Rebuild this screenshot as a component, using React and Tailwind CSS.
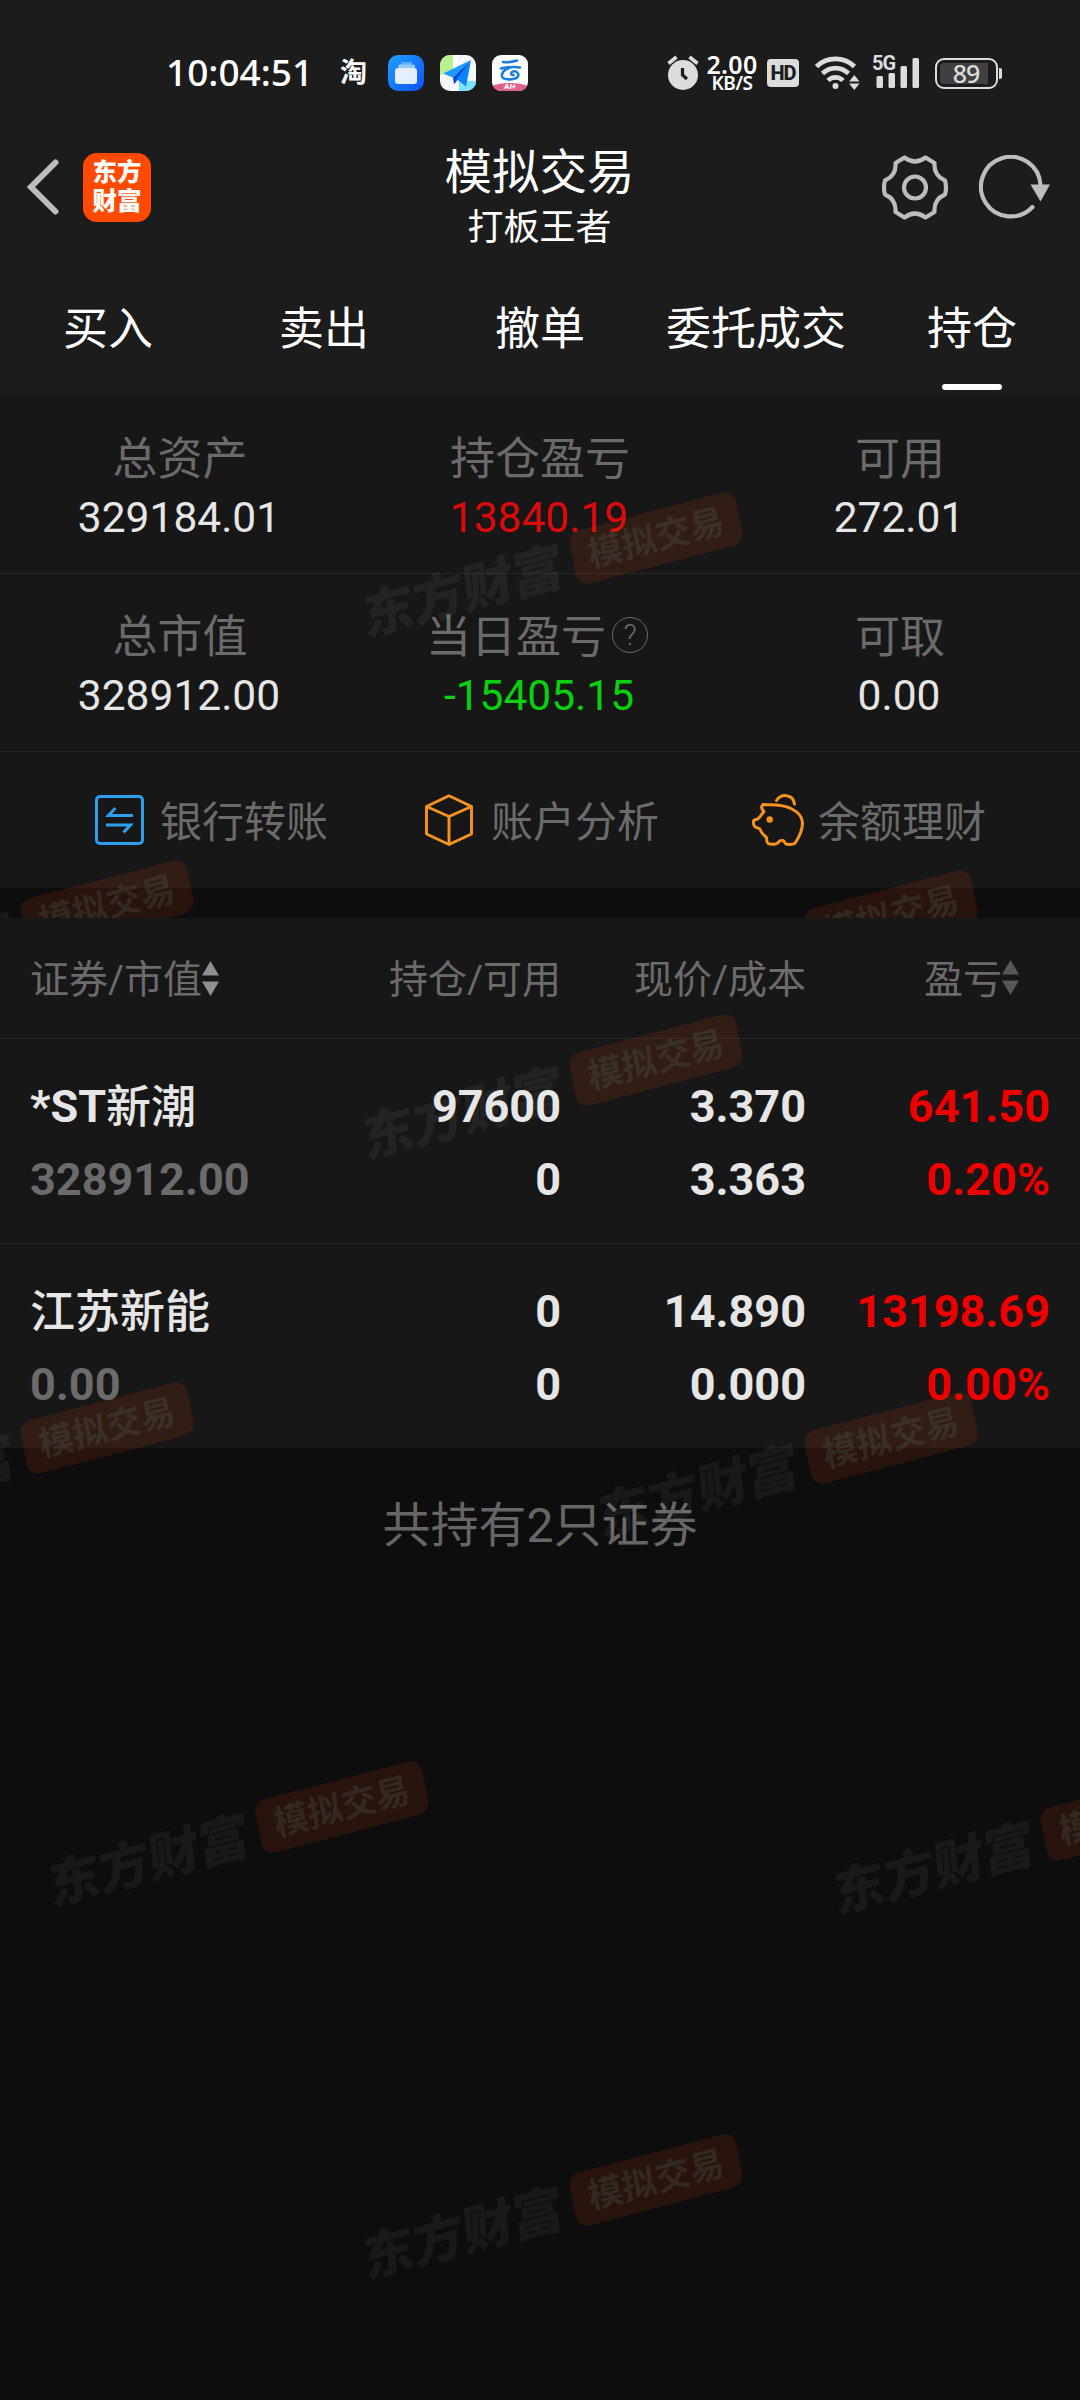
import clsx from "clsx";

const TABS = ["买入", "卖出", "撤单", "委托成交", "持仓"];
const ACTIVE_TAB = "持仓";

const SUMMARY = [
  [
    { label: "总资产", value: "329184.01" },
    { label: "持仓盈亏", value: "13840.19", tone: "up" },
    { label: "可用", value: "272.01" },
  ],
  [
    { label: "总市值", value: "328912.00" },
    { label: "当日盈亏", value: "-15405.15", tone: "down", help: true },
    { label: "可取", value: "0.00" },
  ],
];

const HOLDINGS = [
  {
    name: "*ST新潮",
    marketValue: "328912.00",
    amount: "97600",
    available: "0",
    price: "3.370",
    cost: "3.363",
    profit: "641.50",
    ratio: "0.20%",
  },
  {
    name: "江苏新能",
    marketValue: "0.00",
    amount: "0",
    available: "0",
    price: "14.890",
    cost: "0.000",
    profit: "13198.69",
    ratio: "0.00%",
  },
];

// badge centres, relative to the layer they are painted on
const WATERMARKS = [
  { x: 656, y: 142 },
  { x: 107, y: 510 },
  { x: 891, y: 520 },
  { x: 342, y: 889 },
  { x: 1127, y: 897 },
  { x: 656, y: 1262 },
];

function Watermarks() {
  return (
    <div className="pointer-events-none absolute inset-0 overflow-hidden">
      {WATERMARKS.map(({ x, y }) => (
        <div key={`${x}-${y}`} className="absolute" style={{ left: x, top: y }}>
          <div className="absolute right-[-86px] top-[-36px] flex h-[72px] origin-[calc(100%-86px)_50%] -rotate-[14.7deg] -skew-x-[3deg] items-center gap-[11px] whitespace-nowrap">
            <span className="mt-[7px] -skew-x-6 text-[51.5px] font-black leading-none text-white/[0.05]">
              东方财富
            </span>
            <span className="flex h-[54px] w-[172px] items-center justify-center rounded-[12px] bg-[#ff4a00]/[0.11] text-[35px] font-bold leading-none text-[#6f9a9f]/[0.16]">
              模拟交易
            </span>
          </div>
        </div>
      ))}
    </div>
  );
}

function AlarmIcon() {
  return (
    <svg width="32" height="36" viewBox="0 0 32 36" fill="none">
      <circle cx="16" cy="20" r="15" fill="#dcdcdc" />
      <path d="M1.5 8.5 9.5 2M30.5 8.5 22.5 2" stroke="#dcdcdc" strokeWidth="3.6" />
      <path d="M15.5 13v7l4.5 4" stroke="#1c1c1c" strokeWidth="3.2" />
    </svg>
  );
}

function WifiIcon() {
  return (
    <svg width="45" height="36" viewBox="0 0 45 36" fill="none">
      <g stroke="#dcdcdc" strokeWidth="4.6">
        <path d="M1.5 11.5a27.5 27.5 0 0 1 38 0" />
        <path d="M7.5 18.5a18.5 18.5 0 0 1 26 0" />
        <path d="M13 25.5a10.5 10.5 0 0 1 15 0" />
      </g>
      <circle cx="20.5" cy="31" r="3" fill="#dcdcdc" />
      <path d="M34 26.5 39.3 20l5.2 6.5zM34 28.5h10.5L39.3 35z" fill="#dcdcdc" />
    </svg>
  );
}

function SignalIcon() {
  return (
    <div className="relative h-[36px] w-[48px]">
      <svg width="48" height="36" viewBox="0 0 48 36" fill="#dcdcdc">
        <rect x="3.5" y="21" width="6.5" height="12" rx="1.5" />
        <rect x="15.5" y="18" width="6.5" height="15" rx="1.5" />
        <rect x="27.5" y="11" width="6.5" height="22" rx="1.5" />
        <rect x="39.5" y="3" width="6.5" height="30" rx="1.5" />
      </svg>
      <span className="absolute -left-px -top-px text-[20px] font-bold leading-[18px] tracking-[-1px] text-[#dcdcdc]">
        5G
      </span>
    </div>
  );
}

function BatteryIcon() {
  return (
    <div className="flex items-center gap-[1px]">
      <div className="flex h-[31px] w-[63px] items-center rounded-[9px] border-[2.5px] border-[#dcdcdc] px-[3px]">
        <div className="flex h-[21px] w-[48px] items-center justify-center rounded-l-[4px] bg-[#404040] pl-[4px] font-['Noto_Sans'] text-[25px] font-medium leading-none tracking-[-1px] text-[#dcdcdc]">
          89
        </div>
      </div>
      <div className="h-[11px] w-[3px] rounded-r-[2px] bg-[#dcdcdc]" />
    </div>
  );
}

function StoreIcon() {
  return (
    <svg width="36" height="36" viewBox="0 0 36 36">
      <defs>
        <linearGradient id="store" x1="0" y1="0" x2="1" y2="1">
          <stop offset="0" stopColor="#1fa2ff" />
          <stop offset="1" stopColor="#0d50f5" />
        </linearGradient>
      </defs>
      <rect width="36" height="36" rx="10" fill="url(#store)" />
      <rect x="13" y="7" width="11" height="3" rx="1" fill="#5cb0ff" />
      <rect x="10" y="9.5" width="17" height="4" rx="1.5" fill="#90c9ff" />
      <rect x="7" y="13" width="22" height="16" rx="3" fill="#e4effe" />
    </svg>
  );
}

function MapIcon() {
  return (
    <svg width="36" height="36" viewBox="0 0 36 36">
      <defs>
        <clipPath id="map-clip">
          <rect width="36" height="36" rx="10" />
        </clipPath>
      </defs>
      <g clipPath="url(#map-clip)">
        <rect width="36" height="36" fill="#f3f6fa" />
        <path d="M0 0h13v14L0 20z" fill="#b9f08f" />
        <path d="M19 26h17v10H19z" fill="#7de2fd" />
        <path d="M13 0h5v36h-5z" fill="#fff" />
        <path d="M31 5 3 18.5l10 4z" fill="#1d9bff" />
        <path d="M31 5 13 22.5l1 7 3.5-4.5z" fill="#0448d8" />
        <path d="M31 5 16.5 24 26 31.5z" fill="#0a84ff" />
      </g>
    </svg>
  );
}

function CloudAppIcon() {
  return (
    <div className="relative flex h-[36px] w-[36px] justify-center overflow-hidden rounded-[9px] bg-white">
      <svg width="36" height="36" viewBox="0 0 36 36" fill="none">
        <g stroke="#1b7fe0" strokeWidth="2.6" strokeLinecap="round">
          <path d="M11 7c5 .6 10-.2 14-1.5" />
          <path d="M9 13.5c7-1.5 13-2 19-1" />
          <path d="M17 13c-5 2-7.5 5.5-7 8.5.8 3.5 12 4 15.5.5 2.5-3-1-6.5-4.5-5.5-3 1-2 4 .5 3.5" />
        </g>
        <path d="M0 31c8-4 28-4 36 0v5H0z" fill="#e2608c" />
      </svg>
      <span className="absolute bottom-0 text-[8px] font-black italic leading-[8px] text-white">
        AI+
      </span>
    </div>
  );
}

function GearIcon() {
  return (
    <svg width="66" height="65" viewBox="0 0 66 65" fill="none" stroke="#bdbdbd" strokeWidth="4.2" strokeLinejoin="round">
      <path d="M22.5 2.5Q33 10.5 43.5 2.5L52.5 8Q51.5 20.5 63 25.5Q65 32.5 63 39.5Q51.5 44.5 52.5 57L43.5 62.5Q33 54.5 22.5 62.5L13.5 57Q14.5 44.5 3 39.5Q1 32.5 3 25.5Q14.5 20.5 13.5 8Z" />
      <circle cx="33" cy="32.5" r="11" />
    </svg>
  );
}

function RefreshIcon() {
  return (
    <svg width="71" height="65" viewBox="0 0 71 65" fill="none">
      <path d="M61.5 30A29.8 29.8 0 1 0 53.5 52" stroke="#bdbdbd" strokeWidth="4.2" strokeLinecap="round" />
      <path d="M51.5 29.5H71L61.5 46.5z" fill="#bdbdbd" />
    </svg>
  );
}

function TransferIcon() {
  return (
    <svg width="49" height="50" viewBox="0 0 49 50" fill="none" stroke="#2e9fee" strokeWidth="3">
      <rect x="1.5" y="1.5" width="46" height="47" rx="3.5" />
      <path d="M38 20.5H13.5L20.5 13M11 30H35.5L28.5 37.5" />
    </svg>
  );
}

function CubeIcon() {
  return (
    <svg width="48" height="52" viewBox="0 0 48 52" fill="none" stroke="#f7941d" strokeWidth="2.9" strokeLinejoin="round">
      <path d="M24 1.8 46.5 12.5V40L24 50.5 1.5 40V12.5zM1.5 12.5 24 22.5 46.5 12.5M24 22.5V50.5" />
    </svg>
  );
}

function PiggyIcon() {
  return (
    <svg width="52" height="52" viewBox="0 0 52 52" fill="none" stroke="#f7941d" strokeWidth="3" strokeLinecap="round" strokeLinejoin="round">
      <path d="M24.5 6.5C29-.5 41-.5 42.5 10" />
      <path d="M11 10.5C19 11 32 10 39 14.5 46 18 50.5 23 50.5 29 50.5 36 47 43 43.5 48.5 42 51 38 50.5 34.5 50.3 32.5 50 33 47 31 46.5 29 46.2 27.5 46.5 26.5 48 25.5 50.5 22 50.5 18 50 14 49.5 15 47 14.5 43.5 11 41 9 39 8 35 6 33.5 3 34 2 31.5 1 28 1.2 25.5 4 25.5 7 25.5 8 22 12 17.5 9.5 15.5 9 13 11 10.5Z" />
      <circle cx="17.7" cy="25.5" r="3.2" fill="#f7941d" stroke="none" />
    </svg>
  );
}

function SortIcon({ className }) {
  return (
    <svg width="17" height="35" viewBox="0 0 17 35" fill="currentColor" className={clsx("shrink-0", className)}>
      <path d="M8.5 0 17 14.5H0zM0 20.5h17L8.5 35z" />
    </svg>
  );
}

function StatusBar() {
  return (
    <div className="flex h-[120px] items-center justify-between pl-[166px] pr-[78px] pt-[26px]">
      <div className="flex items-center">
        <span className="w-[174px] pb-[3px] font-['Noto_Sans'] text-[37px] font-medium leading-none text-white">
          10:04:51
        </span>
        <span className="w-[48px] pt-px text-[27px] font-bold leading-none text-white">淘</span>
        <div className="flex gap-[16px]">
          <StoreIcon />
          <MapIcon />
          <CloudAppIcon />
        </div>
      </div>
      <div className="flex items-center">
        <AlarmIcon />
        <div className="ml-[6px] flex w-[54px] flex-col items-center font-['Noto_Sans'] font-semibold text-white">
          <span className="text-[25px] leading-[19px] tracking-[0.3px]">2.00</span>
          <span className="pt-px text-[19px] leading-[16px] tracking-[-0.5px]">KB/S</span>
        </div>
        <span className="ml-[8px] mr-px flex h-[28px] w-[32px] items-center justify-center rounded-[4px] bg-[#dcdcdc] text-[20px] font-extrabold leading-none tracking-[-1px] text-[#1c1c1c]">
          HD
        </span>
        <div className="ml-[15px]">
          <WifiIcon />
        </div>
        <div className="ml-[13px]">
          <SignalIcon />
        </div>
        <div className="ml-[14px]">
          <BatteryIcon />
        </div>
      </div>
    </div>
  );
}

function Header() {
  return (
    <div className="grid h-[134px] grid-cols-3 items-center pl-[27px] pr-[30px]">
      <div className="flex items-center gap-[24px]">
        <svg width="32" height="56" viewBox="0 0 32 56" fill="none" stroke="#bdbdbd" strokeWidth="6" strokeLinecap="round" strokeLinejoin="miter">
          <path d="M28.5 3.5 4 28 28.5 52.5" />
        </svg>
        <div className="flex h-[69px] w-[68px] flex-col items-center justify-center rounded-[14px] bg-[#ff4a00] text-[24.5px] font-black leading-[29px] text-white">
          <span>东方</span>
          <span>财富</span>
        </div>
      </div>
      <div className="flex flex-col items-center self-start pl-[2px] pt-[23px] text-white">
        <h1 className="text-[47.5px] leading-[60px]">模拟交易</h1>
        <p className="text-[36px] leading-[50px]">打板王者</p>
      </div>
      <div className="flex items-center justify-end gap-[31px]">
        <GearIcon />
        <RefreshIcon />
      </div>
    </div>
  );
}

function Tabs() {
  return (
    <nav className="grid h-[142px] grid-cols-5">
      {TABS.map((tab) => (
        <button
          key={tab}
          type="button"
          className="flex flex-col items-center justify-between whitespace-nowrap pb-[6px] pt-[46px] text-[45px] leading-[60px] text-white"
        >
          {tab}
          {tab === ACTIVE_TAB ? (
            <span className="h-[6px] w-[60px] rounded-full bg-white" />
          ) : null}
        </button>
      ))}
    </nav>
  );
}

function SummaryCell({ label, value, tone, help }) {
  return (
    <div className="flex flex-col items-center pt-[34px]">
      <div className="flex h-[60px] items-center text-[45px] leading-[60px] text-[#6b6b6b]">
        {label}
        {help ? (
          <span className="ml-[6px] mr-[6px] mt-[-6px] flex h-[36px] w-[36px] items-center justify-center rounded-full border-[1.5px] border-[#6b6b6b] text-[29px] font-light leading-none">
            ?
          </span>
        ) : null}
      </div>
      <div
        className={clsx("mr-[2px] text-[42.5px] leading-[56px]", {
          "text-[#dc0a0a]": tone === "up",
          "text-[#0ad00f]": tone === "down",
          "text-[#e6e6e6]": !tone,
        })}
      >
        {value}
      </div>
    </div>
  );
}

function Action({ icon, label, className }) {
  return (
    <button type="button" className={clsx("flex items-center text-[42px] leading-[60px] text-[#6b6b6b]", className)}>
      {icon}
      <span className="pt-[6px]">{label}</span>
    </button>
  );
}

function HoldingCell({ top, bottom, className, bottomClassName }) {
  return (
    <div className={clsx("flex flex-col", className)}>
      <span className="leading-[73px]">{top}</span>
      <span className={clsx("leading-[73px]", bottomClassName)}>{bottom}</span>
    </div>
  );
}

function Holdings() {
  return (
    <div className="bg-[#171717]">
      <div className="grid h-[121px] grid-cols-[260px_271px_245px_244px] items-center border-b border-[#262626] px-[30px] pt-[3px] text-[39px] leading-[60px] text-[#6b6b6b]">
        <div className="flex items-center">
          证券/市值
          <SortIcon className="mb-[2px] text-[#8e8e93]" />
        </div>
        <div className="text-right">持仓/可用</div>
        <div className="text-right">现价/成本</div>
        <div className="flex items-center justify-end pr-[31px]">
          盈亏
          <SortIcon className="mb-[4px] text-[#58585b]" />
        </div>
      </div>
      {HOLDINGS.map((row, i) => (
        <div
          key={row.name}
          className={clsx(
            "grid grid-cols-[260px_271px_245px_244px] px-[30px] pt-[31px] text-[45px] font-bold text-[#e6e6e6]",
            i < HOLDINGS.length - 1 ? "h-[205px] border-b border-[#262626]" : "h-[204px]",
          )}
        >
          <HoldingCell
            top={
              <>
                {row.name.replace(/[^\x00-\x7f]/g, "")}
                <span className="relative top-px font-medium">
                  {row.name.replace(/[\x00-\x7f]/g, "")}
                </span>
              </>
            }
            bottom={row.marketValue}
            bottomClassName="text-[#6b6b6b]"
          />
          <HoldingCell top={row.amount} bottom={row.available} className="items-end" />
          <HoldingCell top={row.price} bottom={row.cost} className="items-end" />
          <HoldingCell top={row.profit} bottom={row.ratio} className="items-end text-[#ee0000]" />
        </div>
      ))}
    </div>
  );
}

export default function App() {
  return (
    <div className="flex h-[2400px] w-[1080px] flex-col overflow-hidden bg-[#0d0d0d] font-['Roboto','Noto_Sans_CJK_SC',sans-serif]">
      <header className="bg-[#1c1c1c]">
        <StatusBar />
        <Header />
        <Tabs />
      </header>

      <section className="relative h-[522px]">
        <div className="h-[492px] bg-[#171717]">
          {SUMMARY.map((row) => (
            <div key={row[0].label} className="grid h-[178px] grid-cols-3 border-b border-[#262626]">
              {row.map((cell) => (
                <SummaryCell key={cell.label} {...cell} />
              ))}
            </div>
          ))}
          <div className="flex h-[136px] items-center whitespace-nowrap pl-[95px]">
            <Action icon={<TransferIcon />} label="银行转账" className="mr-[97px] gap-[16px]" />
            <Action icon={<CubeIcon />} label="账户分析" className="mr-[93px] gap-[18px]" />
            <Action icon={<PiggyIcon />} label="余额理财" className="gap-[14px]" />
          </div>
        </div>
        <Watermarks />
      </section>

      <section className="relative flex-1">
        <Holdings />
        <p className="pt-[48px] text-center text-[48px] leading-[60px] text-[#666666]">
          共持有2只证券
        </p>
        <Watermarks />
      </section>
    </div>
  );
}
